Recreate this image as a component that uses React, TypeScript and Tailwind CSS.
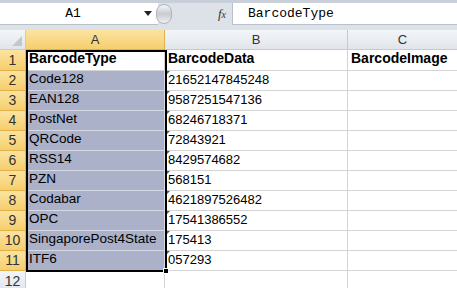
import React from 'react';

const ROWS: [string, string][] = [
  ['Code128', '21652147845248'],
  ['EAN128', '9587251547136'],
  ['PostNet', '68246718371'],
  ['QRCode', '72843921'],
  ['RSS14', '8429574682'],
  ['PZN', '568151'],
  ['Codabar', '4621897526482'],
  ['OPC', '17541386552'],
  ['SingaporePost4State', '175413'],
  ['ITF6', '057293'],
];

const cellFont = { fontFamily: '"Liberation Sans", Arial, sans-serif' };

const Triangle = () => (
  <span className="absolute left-0 top-0 w-0 h-0 border-t-[5px] border-r-[5px] border-t-[#3d6b3d] border-r-transparent" />
);

export default function App() {
  return (
    <div className="w-[457px] h-[288px] overflow-hidden bg-white relative select-none">
      {/* Formula bar */}
      <div className="h-[30px] bg-[#dde2e9] border-t-[3px] border-[#c9cfd8] flex items-start">
        <div className="w-[158px] h-[22px] bg-white border-b border-[#b8c0cc] flex items-center relative">
          <span className="flex-1 text-center text-[13px] text-black pl-[2px]" style={{ fontFamily: '"Liberation Mono", monospace' }}>A1</span>
          <svg width="8" height="5" className="mr-[6px]" viewBox="0 0 8 5"><path d="M0 0h8L4 5z" fill="#222" /></svg>
        </div>
        <div className="w-[14px] h-[22px] relative">
          <div className="absolute left-[-2px] top-[1px] w-[16px] h-[20px] rounded-full bg-gradient-to-b from-[#f4f5f7] via-[#c8ccd2] to-[#eef0f3] border border-[#aeb4bd]" />
        </div>
        <div className="w-[60px] h-[22px] flex items-center justify-end pr-[6px]">
          <span className="italic text-[13px] text-[#333]" style={{ fontFamily: '"Liberation Serif", serif' }}>f<span className="text-[10px]">x</span></span>
        </div>
        <div className="flex-1 h-[22px] bg-white border-l border-b border-[#b8c0cc] flex items-center pl-[15px]">
          <span className="text-[13px] text-black" style={{ fontFamily: '"Liberation Mono", monospace' }}>BarcodeType</span>
        </div>
      </div>

      {/* Sheet */}
      <div className="relative">
        <div className="grid grid-cols-[26px_139px_183px_1fr]" style={cellFont}>
          {/* column headers */}
          <div className="h-[20px] bg-gradient-to-b from-[#f3f5f8] to-[#e1e5eb] border-r border-b border-[#c5cbd4] relative">
            <svg width="10" height="10" className="absolute right-[3px] bottom-[3px]" viewBox="0 0 10 10"><path d="M10 0v10H0z" fill="#c3c8cf" /></svg>
          </div>
          <div className="h-[20px] bg-gradient-to-b from-[#fbe3a0] to-[#f6cf6c] border-r border-b border-[#e0b04a] flex items-center justify-center text-[13px] text-[#333]">A</div>
          <div className="h-[20px] bg-gradient-to-b from-[#f3f5f8] to-[#e1e5eb] border-r border-b border-[#c5cbd4] flex items-center justify-center text-[13px] text-[#333]">B</div>
          <div className="h-[20px] bg-gradient-to-b from-[#f3f5f8] to-[#e1e5eb] border-b border-[#c5cbd4] flex items-center justify-center text-[13px] text-[#333]">C</div>

          {/* row 1 */}
          <div className="h-[21px] bg-gradient-to-b from-[#fbe3a0] to-[#f6cf6c] border-r border-b border-[#e0b04a] flex items-center justify-center text-[14px] text-[#333]">1</div>
          <div className="h-[21px] border-r border-b border-[#d4d4d4] flex items-end pb-[1px] pl-[3px] text-[14px] font-bold text-black">BarcodeType</div>
          <div className="h-[21px] border-r border-b border-[#d4d4d4] flex items-end pb-[1px] pl-[3px] text-[14px] font-bold text-black">BarcodeData</div>
          <div className="h-[21px] border-b border-[#d4d4d4] flex items-end pb-[1px] pl-[3px] text-[14px] font-bold text-black">BarcodeImage</div>

          {ROWS.map(([type, data], i) => (
            <React.Fragment key={type}>
              <div className="h-[20px] bg-gradient-to-b from-[#fbe3a0] to-[#f6cf6c] border-r border-b border-[#e0b04a] flex items-center justify-center text-[14px] text-[#333]">{i + 2}</div>
              <div className="h-[20px] bg-[#aab1c9] border-r border-b border-[#d6d9e4] flex items-end pb-[1px] pl-[3px] text-[13.5px] text-black">{type}</div>
              <div className="h-[20px] border-r border-b border-[#d4d4d4] flex items-end pb-[1px] pl-[3px] text-[13px] text-black relative">
                <Triangle />
                {data}
              </div>
              <div className="h-[20px] border-b border-[#d4d4d4]" />
            </React.Fragment>
          ))}

          {/* row 12 */}
          <div className="h-[20px] bg-gradient-to-b from-[#f3f5f8] to-[#e1e5eb] border-r border-[#c5cbd4] flex items-center justify-center text-[14px] text-[#333]">12</div>
          <div className="h-[20px] border-r border-[#d4d4d4]" />
          <div className="h-[20px] border-r border-[#d4d4d4]" />
          <div className="h-[20px]" />
        </div>

        {/* selection outline over column A */}
        <div className="absolute left-[26px] top-[20px] w-[141px] h-[222px] border-2 border-black pointer-events-none" />
        <div className="absolute left-[163px] top-[238px] w-[6px] h-[6px] bg-black border border-white pointer-events-none" />
      </div>
    </div>
  );
}
